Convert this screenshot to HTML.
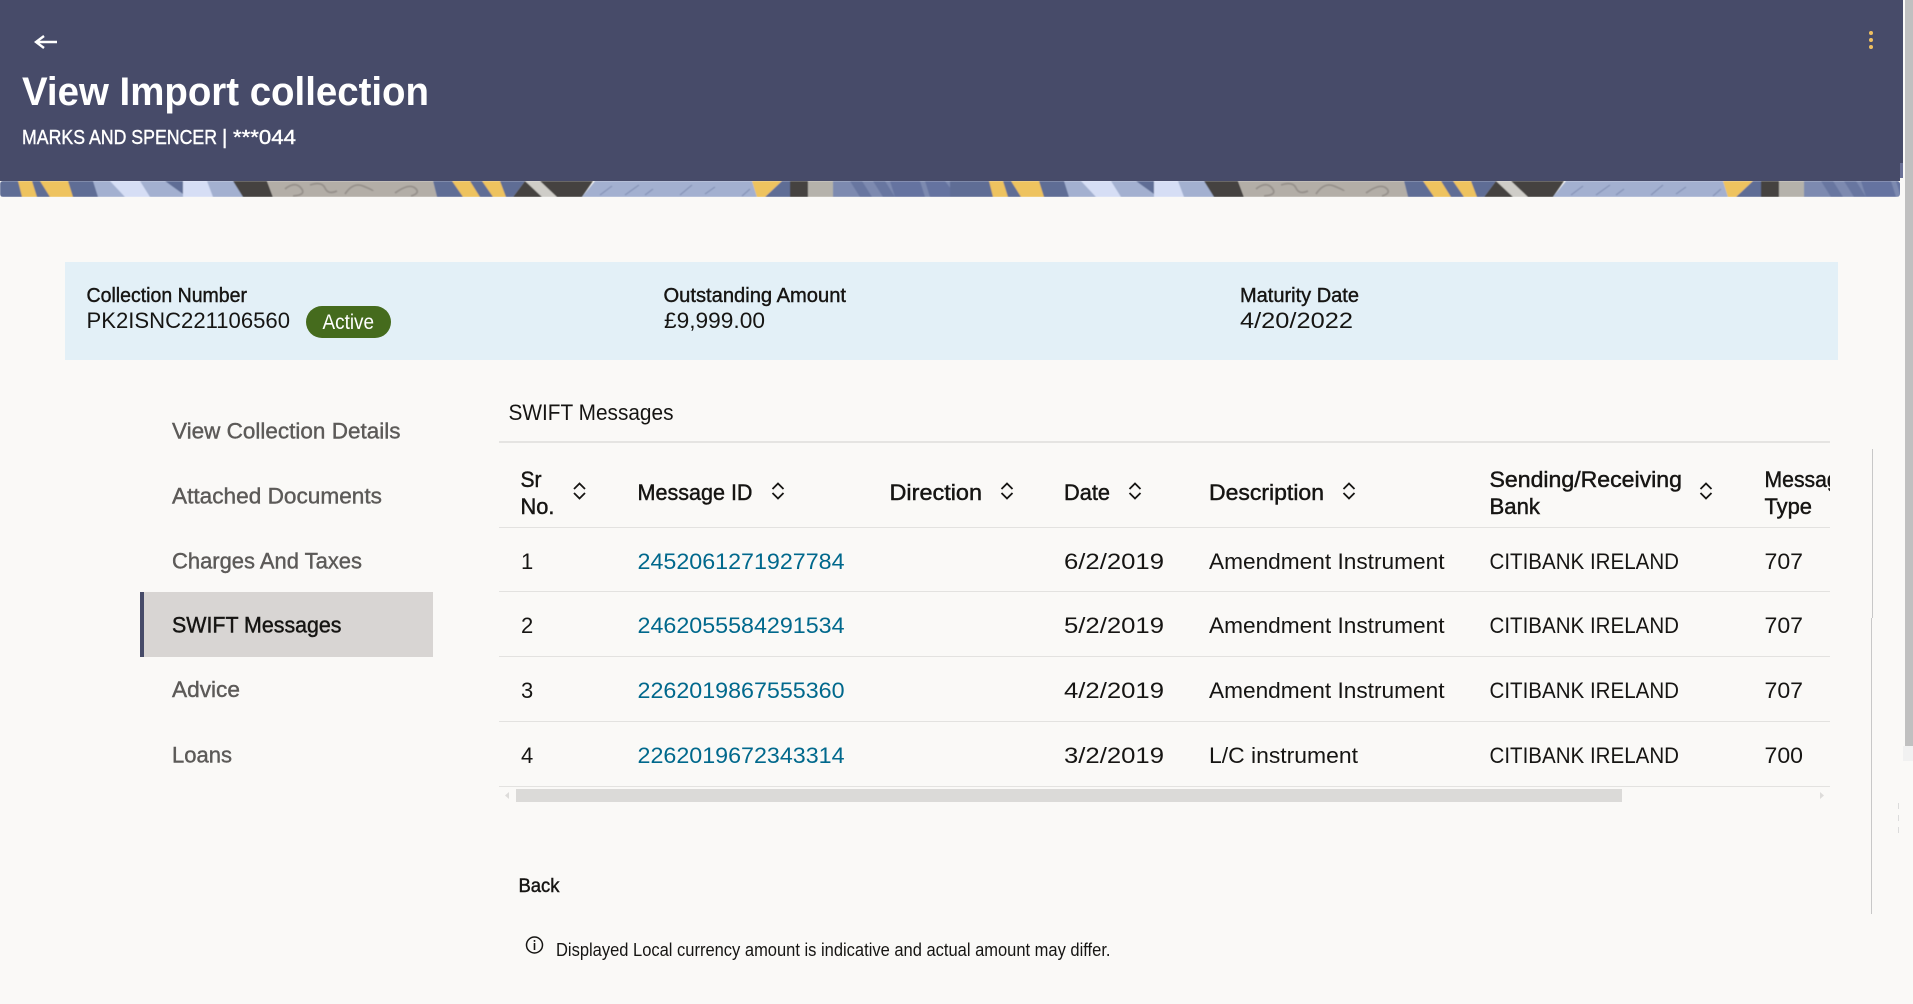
<!DOCTYPE html>
<html lang="en">
<head>
<meta charset="utf-8">
<title>View Import collection</title>
<style>
html,body{margin:0;padding:0;width:1913px;height:1004px;overflow:hidden;background:#faf9f7}
svg{display:block;position:absolute;left:0;top:0}
text{font-family:"Liberation Sans",sans-serif;fill:#161513;font-size:22px;white-space:pre}
.m{stroke:#161513;stroke-width:.45px}
.l{font-size:20px;stroke:#161513;stroke-width:.4px}
.v{font-size:22.5px}
.n{fill:#5c5a58;stroke:#5c5a58;stroke-width:.4px}
.a{fill:#00688c}
.w{fill:#fff}
</style>
</head>
<body>
<svg width="1913" height="1004" viewBox="0 0 1913 1004" xmlns="http://www.w3.org/2000/svg">
<defs>
<symbol id="s" viewBox="0 0 14 18" overflow="visible">
<path d="M1.500 7 7 1.500 12.500 7M1.500 11 7 16.500 12.500 11" fill="none" stroke="#161513" stroke-width="1.800"/>
</symbol>
<filter id="b" x="0" y="0" width="100%" height="100%"><feGaussianBlur stdDeviation=".6"/></filter>
<clipPath id="bc"><rect x="0" y="181" width="1900" height="16" rx="3"/></clipPath>
<clipPath id="tc"><rect x="499" y="450" width="1331" height="80"/></clipPath>
<g id="tile">
<rect x="0" y="0" width="98" height="16" fill="#5f6d95"/>
<polygon points="18,0 32,0 37,16 22,16" fill="#eec35e"/>
<polygon points="40,0 68,0 73,16 50,16" fill="#eec35e"/>
<polygon points="93,0 240,0 243,16 98,16" fill="#a3b0d0"/>
<polygon points="110,0 140,0 150,16 125,16" fill="#d6def5"/>
<polygon points="165,0 183,0 183,13" fill="#5f6d95"/>
<polygon points="183,13 183,0 207,0 213,16 183,16" fill="#d6def5"/>
<polygon points="233,0 267,0 273,16 243,16" fill="#45433f"/>
<polygon points="267,0 433,0 437,16 273,16" fill="#b3aea7"/>
<path d="M285 8q10-8 16-1t-8 8M310 4q12-4 15 3t12 3M345 13q8-12 18-8t10 5M395 12q14-10 20-5t-4 8" fill="none" stroke="#96918b" stroke-width="1.800"/>
<polygon points="433,0 525,0 513,16 437,16" fill="#5f6d95"/>
<polygon points="452,0 470,0 480,16 463,16" fill="#eec35e"/>
<polygon points="482,0 500,0 506,16 493,16" fill="#eec35e"/>
<polygon points="525,0 593,0 582,16 513,16" fill="#45433f"/>
<polygon points="525,0 540,0 557,16 542,16" fill="#cfcdc8"/>
<polygon points="595,0 752,0 757,16 582,16" fill="#a3b0d0"/>
<path d="M600 14l12-9M625 14l14-10M645 14l8-6M680 14l12-10M705 13l10-7M742 15l8-7" fill="none" stroke="#8794b8" stroke-width="1.300"/>
<polygon points="752,0 782,0 765,16 757,16" fill="#eec35e"/>
<polygon points="782,0 790,0 790,16 765,16" fill="#5f6d95"/>
<rect x="790" y="0" width="18" height="16" fill="#45433f"/>
<polygon points="808,0 833,0 838,16 808,16" fill="#b5b2ab"/>
<rect x="833" y="0" width="138" height="16" fill="#7d8ab0"/>
<polygon points="850,0 862,0 872,16 860,16" fill="#6776a0"/>
<polygon points="873,0 885,0 895,16 883,16" fill="#6776a0"/>
<polygon points="890,0 920,0 925,16 895,16" fill="#6573a0"/>
<polygon points="925,0 945,0 957,16 930,16" fill="#6573a0"/>
<rect x="950" y="0" width="21" height="16" fill="#5f6d95"/>
</g>
</defs>

<rect width="1913" height="1004" fill="#faf9f7"/>

<!-- header -->
<rect x="0" y="0" width="1903" height="163" fill="#474b69"/>
<rect x="0" y="163" width="1900" height="18" fill="#474b69"/>
<rect x="1900" y="163" width="3" height="15" fill="#6a7096"/>
<g clip-path="url(#bc)"><g filter="url(#b)">
<use href="#tile" x="0" y="181"/>
<use href="#tile" x="971" y="181"/>
</g></g>
<path d="M57 42H36M44 36 36 42 44 48" fill="none" stroke="#fff" stroke-width="2.400"/>
<text class="w" x="22" y="105" style="font-size:40px;font-weight:700" textLength="407" lengthAdjust="spacingAndGlyphs">View Import collection</text>
<text class="w" x="22" y="144" style="font-size:20.500px;stroke:#fff;stroke-width:.4px" textLength="195" lengthAdjust="spacingAndGlyphs">MARKS AND SPENCER</text>
<text class="w" x="222" y="144" style="font-size:20.500px;stroke:#fff;stroke-width:.4px">|</text>
<text class="w" x="233" y="144" style="font-size:20.500px;stroke:#fff;stroke-width:.4px" textLength="63" lengthAdjust="spacingAndGlyphs">***044</text>
<circle cx="1871" cy="33" r="2" fill="#f0c060"/><circle cx="1871" cy="40" r="2" fill="#f0c060"/><circle cx="1871" cy="47" r="2" fill="#f0c060"/>

<!-- page scrollbar -->
<rect x="1905" y="0" width="8" height="746" fill="#c0c0c0"/>
<rect x="1903" y="746" width="10" height="15" fill="#f1f1f1"/>

<!-- info bar -->
<rect x="65" y="262" width="1773" height="98" fill="#e3f0f7"/>
<text class="l" x="86.500" y="302" textLength="160.500" lengthAdjust="spacingAndGlyphs">Collection Number</text>
<text class="v" x="86.500" y="328" textLength="203.500" lengthAdjust="spacingAndGlyphs">PK2ISNC221106560</text>
<rect x="306" y="306" width="85" height="32" rx="16" fill="#456b1d"/>
<text class="w" x="322.500" y="329" style="font-size:21px" textLength="51.500" lengthAdjust="spacingAndGlyphs">Active</text>
<text class="l" x="663.500" y="302" textLength="182.500" lengthAdjust="spacingAndGlyphs">Outstanding Amount</text>
<text class="v" x="664" y="328" textLength="101" lengthAdjust="spacingAndGlyphs">£9,999.00</text>
<text class="l" x="1240" y="302" textLength="119" lengthAdjust="spacingAndGlyphs">Maturity Date</text>
<text class="v" x="1240" y="328" textLength="113" lengthAdjust="spacingAndGlyphs">4/20/2022</text>

<!-- side nav -->
<rect x="140" y="592" width="293" height="65" fill="#d8d5d3"/>
<rect x="140" y="592" width="4" height="65" fill="#474b69"/>
<text class="n" x="172" y="438.500" textLength="228.500" lengthAdjust="spacingAndGlyphs">View Collection Details</text>
<text class="n" x="172" y="503.500" textLength="210" lengthAdjust="spacingAndGlyphs">Attached Documents</text>
<text class="n" x="172" y="568.500" textLength="190" lengthAdjust="spacingAndGlyphs">Charges And Taxes</text>
<text class="m" x="172" y="632.500" textLength="169.500" lengthAdjust="spacingAndGlyphs">SWIFT Messages</text>
<text class="n" x="172" y="697" textLength="68" lengthAdjust="spacingAndGlyphs">Advice</text>
<text class="n" x="172" y="762.500" textLength="60" lengthAdjust="spacingAndGlyphs">Loans</text>

<!-- table title -->
<text x="508.500" y="420" textLength="165" lengthAdjust="spacingAndGlyphs">SWIFT Messages</text>
<rect x="499" y="441" width="1331" height="2" fill="#e5e4e2"/>

<!-- table header -->
<text class="m" x="520.500" y="487" textLength="21" lengthAdjust="spacingAndGlyphs">Sr</text>
<text class="m" x="520.500" y="514" textLength="34" lengthAdjust="spacingAndGlyphs">No.</text>
<use href="#s" x="572.500" y="482" width="14" height="18"/>
<text class="m" x="637.500" y="500" textLength="115" lengthAdjust="spacingAndGlyphs">Message ID</text>
<use href="#s" x="771" y="482" width="14" height="18"/>
<text class="m" x="889.500" y="500" textLength="92.500" lengthAdjust="spacingAndGlyphs">Direction</text>
<use href="#s" x="1000" y="482" width="14" height="18"/>
<text class="m" x="1064" y="500" textLength="46" lengthAdjust="spacingAndGlyphs">Date</text>
<use href="#s" x="1128" y="482" width="14" height="18"/>
<text class="m" x="1209" y="500" textLength="115" lengthAdjust="spacingAndGlyphs">Description</text>
<use href="#s" x="1342" y="482" width="14" height="18"/>
<text class="m" x="1489.500" y="487" textLength="192.500" lengthAdjust="spacingAndGlyphs">Sending/Receiving</text>
<text class="m" x="1489.500" y="514" textLength="50.500" lengthAdjust="spacingAndGlyphs">Bank</text>
<use href="#s" x="1699" y="482" width="14" height="18"/>
<g clip-path="url(#tc)"><text class="m" x="1764.500" y="487" textLength="86" lengthAdjust="spacingAndGlyphs">Message</text></g>
<text class="m" x="1764.500" y="514" textLength="47.500" lengthAdjust="spacingAndGlyphs">Type</text>

<!-- row lines -->
<g fill="#e3e2e0">
<rect x="499" y="527" width="1331" height="1"/>
<rect x="499" y="591" width="1331" height="1"/>
<rect x="499" y="656" width="1331" height="1"/>
<rect x="499" y="721" width="1331" height="1"/>
<rect x="499" y="786" width="1331" height="1"/>
</g>

<!-- rows -->
<text x="521" y="569">1</text>
<text class="a" x="637.500" y="569" textLength="207" lengthAdjust="spacingAndGlyphs">2452061271927784</text>
<text x="1064" y="569" textLength="100" lengthAdjust="spacingAndGlyphs">6/2/2019</text>
<text x="1209" y="569" textLength="235.500" lengthAdjust="spacingAndGlyphs">Amendment Instrument</text>
<text x="1489.500" y="569" textLength="189.500" lengthAdjust="spacingAndGlyphs">CITIBANK IRELAND</text>
<text x="1764.500" y="569" textLength="38.500" lengthAdjust="spacingAndGlyphs">707</text>

<text x="521" y="633">2</text>
<text class="a" x="637.500" y="633" textLength="207" lengthAdjust="spacingAndGlyphs">2462055584291534</text>
<text x="1064" y="633" textLength="100" lengthAdjust="spacingAndGlyphs">5/2/2019</text>
<text x="1209" y="633" textLength="235.500" lengthAdjust="spacingAndGlyphs">Amendment Instrument</text>
<text x="1489.500" y="633" textLength="189.500" lengthAdjust="spacingAndGlyphs">CITIBANK IRELAND</text>
<text x="1764.500" y="633" textLength="38.500" lengthAdjust="spacingAndGlyphs">707</text>

<text x="521" y="698">3</text>
<text class="a" x="637.500" y="698" textLength="207" lengthAdjust="spacingAndGlyphs">2262019867555360</text>
<text x="1064" y="698" textLength="100" lengthAdjust="spacingAndGlyphs">4/2/2019</text>
<text x="1209" y="698" textLength="235.500" lengthAdjust="spacingAndGlyphs">Amendment Instrument</text>
<text x="1489.500" y="698" textLength="189.500" lengthAdjust="spacingAndGlyphs">CITIBANK IRELAND</text>
<text x="1764.500" y="698" textLength="38.500" lengthAdjust="spacingAndGlyphs">707</text>

<text x="521" y="763">4</text>
<text class="a" x="637.500" y="763" textLength="207" lengthAdjust="spacingAndGlyphs">2262019672343314</text>
<text x="1064" y="763" textLength="100" lengthAdjust="spacingAndGlyphs">3/2/2019</text>
<text x="1209" y="763" textLength="149" lengthAdjust="spacingAndGlyphs">L/C instrument</text>
<text x="1489.500" y="763" textLength="189.500" lengthAdjust="spacingAndGlyphs">CITIBANK IRELAND</text>
<text x="1764.500" y="763" textLength="38.500" lengthAdjust="spacingAndGlyphs">700</text>

<!-- horizontal scrollbar -->
<rect x="516" y="789" width="1106" height="13" fill="#dbdad8"/>
<polygon points="509,792 505,795.500 509,799" fill="#dddcda"/>
<polygon points="1820,792 1824,795.500 1820,799" fill="#dddcda"/>

<!-- vertical rule -->
<rect x="1872" y="449" width="1" height="169" fill="#c8c8c8"/>
<rect x="1871" y="618" width="1" height="296" fill="#c8c8c8"/>
<rect x="1898" y="803" width="1" height="6" fill="#dcdcdc"/>
<rect x="1898" y="815" width="1" height="6" fill="#dcdcdc"/>
<rect x="1898" y="827" width="1" height="6" fill="#dcdcdc"/>

<!-- footer -->
<text class="m" x="518.500" y="892" style="font-size:19.500px" textLength="41" lengthAdjust="spacingAndGlyphs">Back</text>
<circle cx="534.500" cy="945" r="8" fill="none" stroke="#161513" stroke-width="1.500"/>
<rect x="533.700" y="943" width="1.600" height="7" fill="#161513"/>
<rect x="533.700" y="940" width="1.600" height="1.800" fill="#161513"/>
<text x="556" y="956" style="font-size:18px" textLength="554.500" lengthAdjust="spacingAndGlyphs">Displayed Local currency amount is indicative and actual amount may differ.</text>
</svg>
</body>
</html>
